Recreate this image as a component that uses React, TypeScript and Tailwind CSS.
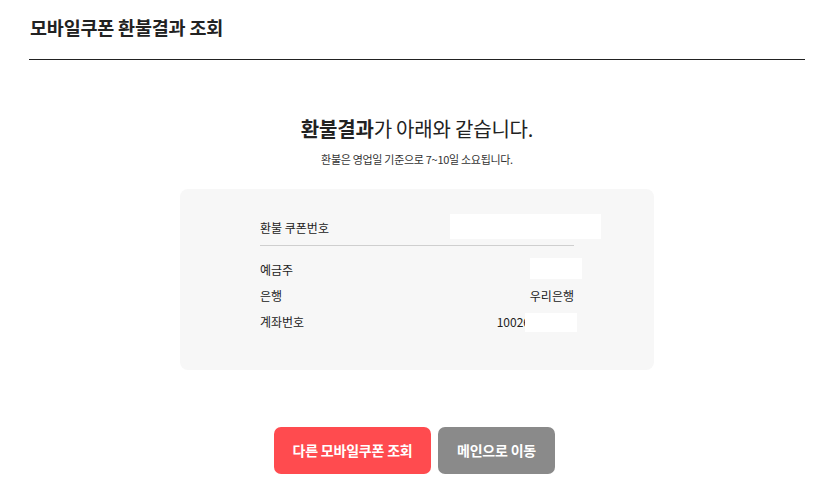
import React from 'react';

const font = { fontFamily: '"Noto Sans CJK KR", "Noto Sans", sans-serif' };

const InfoRow: React.FC<{ label: string; children: React.ReactNode }> = ({ label, children }) => (
  <div className="flex h-[26px] items-center justify-between text-[12px] text-[#222]">
    <span>{label}</span>
    <div className="flex items-center">{children}</div>
  </div>
);

export default function App() {
  return (
    <div className="min-h-[491px] bg-white" style={font}>
      <div className="pl-[29px] pr-[19px]">
        {/* Page title */}
        <div className="flex h-[60px] items-center border-b border-[#222] pl-px pb-[3px]">
          <h1 className="text-[18.5px] font-bold tracking-[-0.2px] text-[#222]">모바일쿠폰 환불결과 조회</h1>
        </div>

        {/* Result heading */}
        <div className="flex flex-col items-center pt-[55px]">
          <h2 className="text-[20px] leading-[28px] tracking-[-0.2px] text-[#222]">
            <span className="font-bold">환불결과</span>가 아래와 같습니다.
          </h2>
          <p className="mt-[8px] text-[11px] leading-[16px] tracking-[-0.3px] text-[#333]">
            환불은 영업일 기준으로 7~10일 소요됩니다.
          </p>
        </div>

        {/* Result box */}
        <div className="mx-auto mt-[22px] w-[474px] rounded-[8px] bg-[#f7f7f7] pt-[22px] pb-[35px]">
          <div className="mx-auto w-[314px]">
            <div className="flex h-[32px] items-center justify-between text-[12px] text-[#222]">
              <span className="pt-[2px]">환불 쿠폰번호</span>
              <span className="mr-[-27px] mb-[2px] h-[25px] w-[151px] bg-white" />
            </div>
            <div className="mt-[2px] mb-[11px] h-px bg-[#cfcfcf]" />
            <InfoRow label="예금주">
              <span className="mr-[-8px] mb-[4px] h-[21px] w-[52px] bg-white" />
            </InfoRow>
            <InfoRow label="은행">
              <span>우리은행</span>
            </InfoRow>
            <InfoRow label="계좌번호">
              <span className="mr-[-3px] flex items-center">
                <span>10026</span>
                <span className="ml-[-5px] h-[19px] w-[52px] bg-white" />
              </span>
            </InfoRow>
          </div>
        </div>

        {/* Actions */}
        <div className="mt-[57px] flex justify-center gap-[7px] pr-[5px]">
          <button className="h-[47px] w-[157px] rounded-[7px] bg-[#ff4b4f] text-[14px] font-bold tracking-[-0.2px] text-white">
            다른 모바일쿠폰 조회
          </button>
          <button className="h-[47px] w-[117px] rounded-[7px] bg-[#8a8a8a] text-[14px] font-bold tracking-[-0.2px] text-white">
            메인으로 이동
          </button>
        </div>
      </div>
    </div>
  );
}
